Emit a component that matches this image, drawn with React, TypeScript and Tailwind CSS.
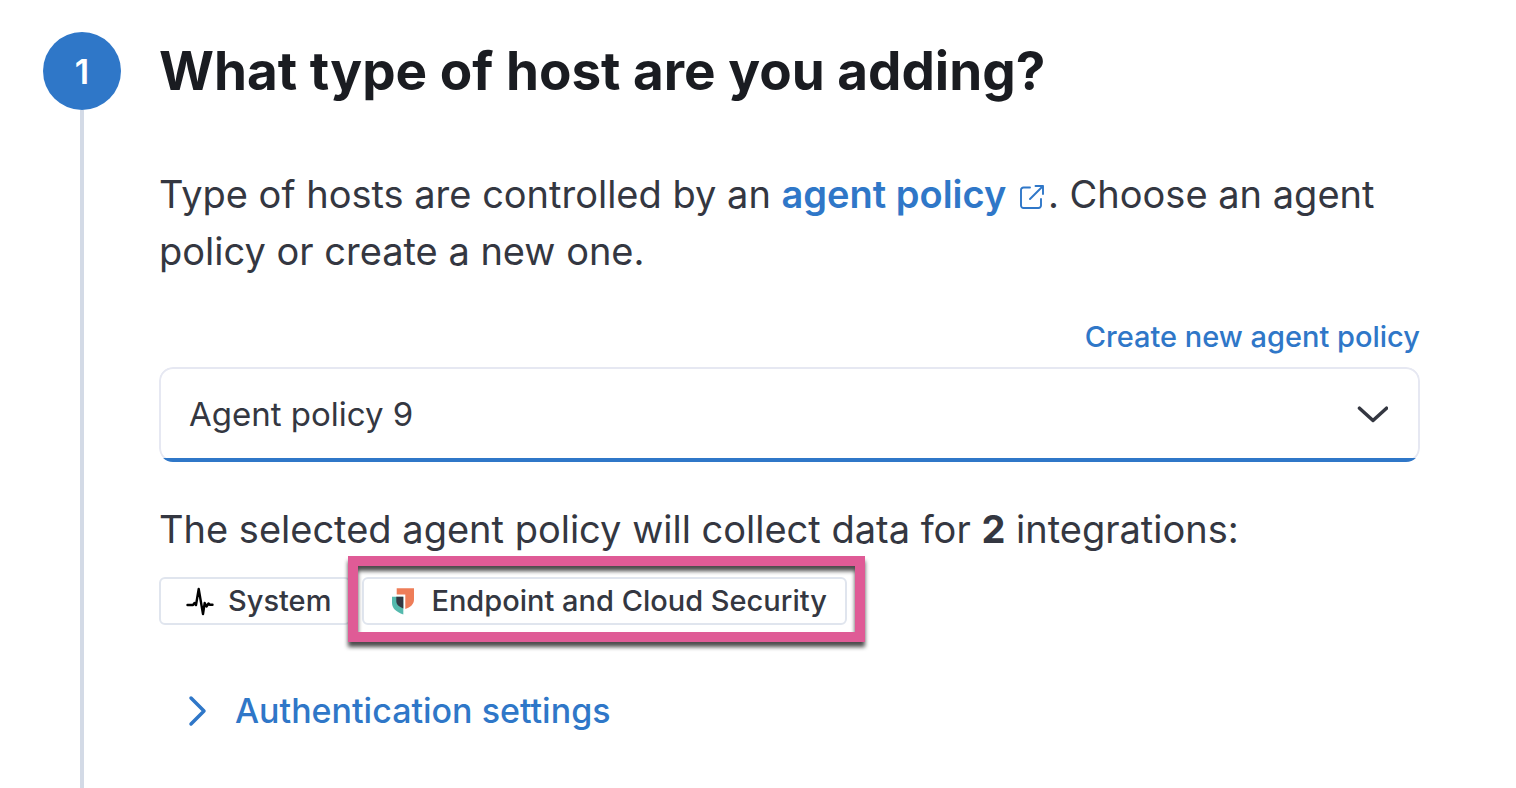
import type { ReactNode } from "react";

function ExternalIcon() {
  return (
    <svg className="mr-1 ml-1 inline size-6 align-[-1px]" viewBox="0 0 24 24" fill="none" stroke="currentColor" strokeWidth="1.9" strokeLinecap="round" strokeLinejoin="round" aria-hidden="true">
      <path d="M10 2.5H3.5A2.5 2.5 0 0 0 1 5v15.500A2.500 2.500 0 0 0 3.500 23H18.500A2.500 2.500 0 0 0 21 20.500V14M15.500 1H23v8M23 1 10 14" />
    </svg>
  );
}

function PulseIcon() {
  return (
    <svg className="size-7 shrink-0 overflow-visible" viewBox="0 0 28 28" fill="none" stroke="#000" strokeWidth="2.4" strokeLinejoin="round" strokeLinecap="round" aria-hidden="true">
      <path d="M1.500 18H7L8.500 16L10 18L12.700 2L17 27L18.700 16L20.500 19.500L22.500 16.500L24 17.800H26.500" />
    </svg>
  );
}

function ShieldIcon() {
  return (
    <svg className="size-7 shrink-0" viewBox="0 0 28 28" aria-hidden="true">
      <path fill="#ee7d58" d="M7.700 1.300H25V12.500C25 17 21.500 20.500 16.300 22V7.500H7.700Z" />
      <path fill="#54b9ad" d="M3 9.800H14.300V27.500C7 25 3 21 3 16Z" />
      <path fill="#343741" d="M7.300 9.800H14.300V21.500C10 19.800 7.300 17.500 7.300 14Z" />
    </svg>
  );
}

function Badge({ icon, children }: { icon: ReactNode; children: ReactNode }) {
  return (
    <span className="flex h-12 items-center gap-[14px] rounded-md border-2 border-[#e0e5ee] bg-white pr-[18px] pl-[25px] text-[29px] font-medium">
      {icon}
      {children}
    </span>
  );
}

export default function App() {
  return (
    <main className="flex min-h-screen gap-[38px] bg-white pr-24 pl-[43px] font-['Inter',sans-serif] text-[#343741]">
      <div className="flex w-[78px] shrink-0 flex-col items-center pt-8">
        <div className="flex size-[78px] shrink-0 items-center justify-center rounded-full bg-[#2f77c8] text-[34px] font-semibold text-white">1</div>
        <div className="w-1 grow bg-[#d3dae6]" />
      </div>
      <section className="min-w-0 grow pt-9 pb-8">
        <h1 className="text-[53px] leading-[70px] font-bold text-[#1a1c21]">What type of host are you adding?</h1>
        <p className="mt-[60px] text-[38px] leading-[57px]">
          Type of hosts are controlled by an{" "}
          <a href="#agent-policy" className="font-semibold text-[#2f77c8]">
            agent policy <ExternalIcon />
          </a>
          . Choose an agent policy or create a new one.
        </p>
        <div className="mt-[33px] mb-[6px] flex h-12 items-center justify-end">
          <button type="button" className="text-[29px] font-medium text-[#2f77c8]">Create new agent policy</button>
        </div>
        <div className="relative overflow-hidden rounded-[14px]">
          <select aria-label="Agent policy" className="block h-[95px] w-full appearance-none rounded-[14px] border-2 border-[#e6e8f2] bg-white px-7 text-[33px]">
            <option>Agent policy 9</option>
          </select>
          <svg className="pointer-events-none absolute top-8 right-8 size-8" viewBox="0 0 32 32" fill="none" stroke="#343741" strokeWidth="3.500" strokeLinecap="round" strokeLinejoin="round" aria-hidden="true">
            <path d="M3.500 9.200 17 21.500 30.500 9.200" />
          </svg>
          <div className="pointer-events-none absolute inset-x-0 bottom-0 h-1 bg-[#2f77c8]" />
        </div>
        <p className="mt-[39px] text-[38px] leading-[57px]">
          The selected agent policy will collect data for <strong>2</strong> integrations:
        </p>
        <div className="mt-[19px] flex gap-[11px]">
          <Badge icon={<PulseIcon />}>System</Badge>
          <div className="relative">
            <Badge icon={<ShieldIcon />}>Endpoint and Cloud Security</Badge>
            <div className="pointer-events-none absolute -top-[21px] -right-[18px] -bottom-[17px] -left-[14px] border-10 border-[#df5b96] drop-shadow-[0_5px_2px_rgba(0,0,0,0.7)]" />
          </div>
        </div>
        <button type="button" className="mt-[60px] ml-7 flex items-center gap-7 text-[34px] font-medium text-[#2f77c8]">
          <svg className="h-8 w-5" viewBox="0 0 20 32" fill="none" stroke="currentColor" strokeWidth="3.500" strokeLinecap="round" strokeLinejoin="round" aria-hidden="true">
            <path d="M4 3 17 16 4 29" />
          </svg>
          Authentication settings
        </button>
      </section>
    </main>
  );
}
